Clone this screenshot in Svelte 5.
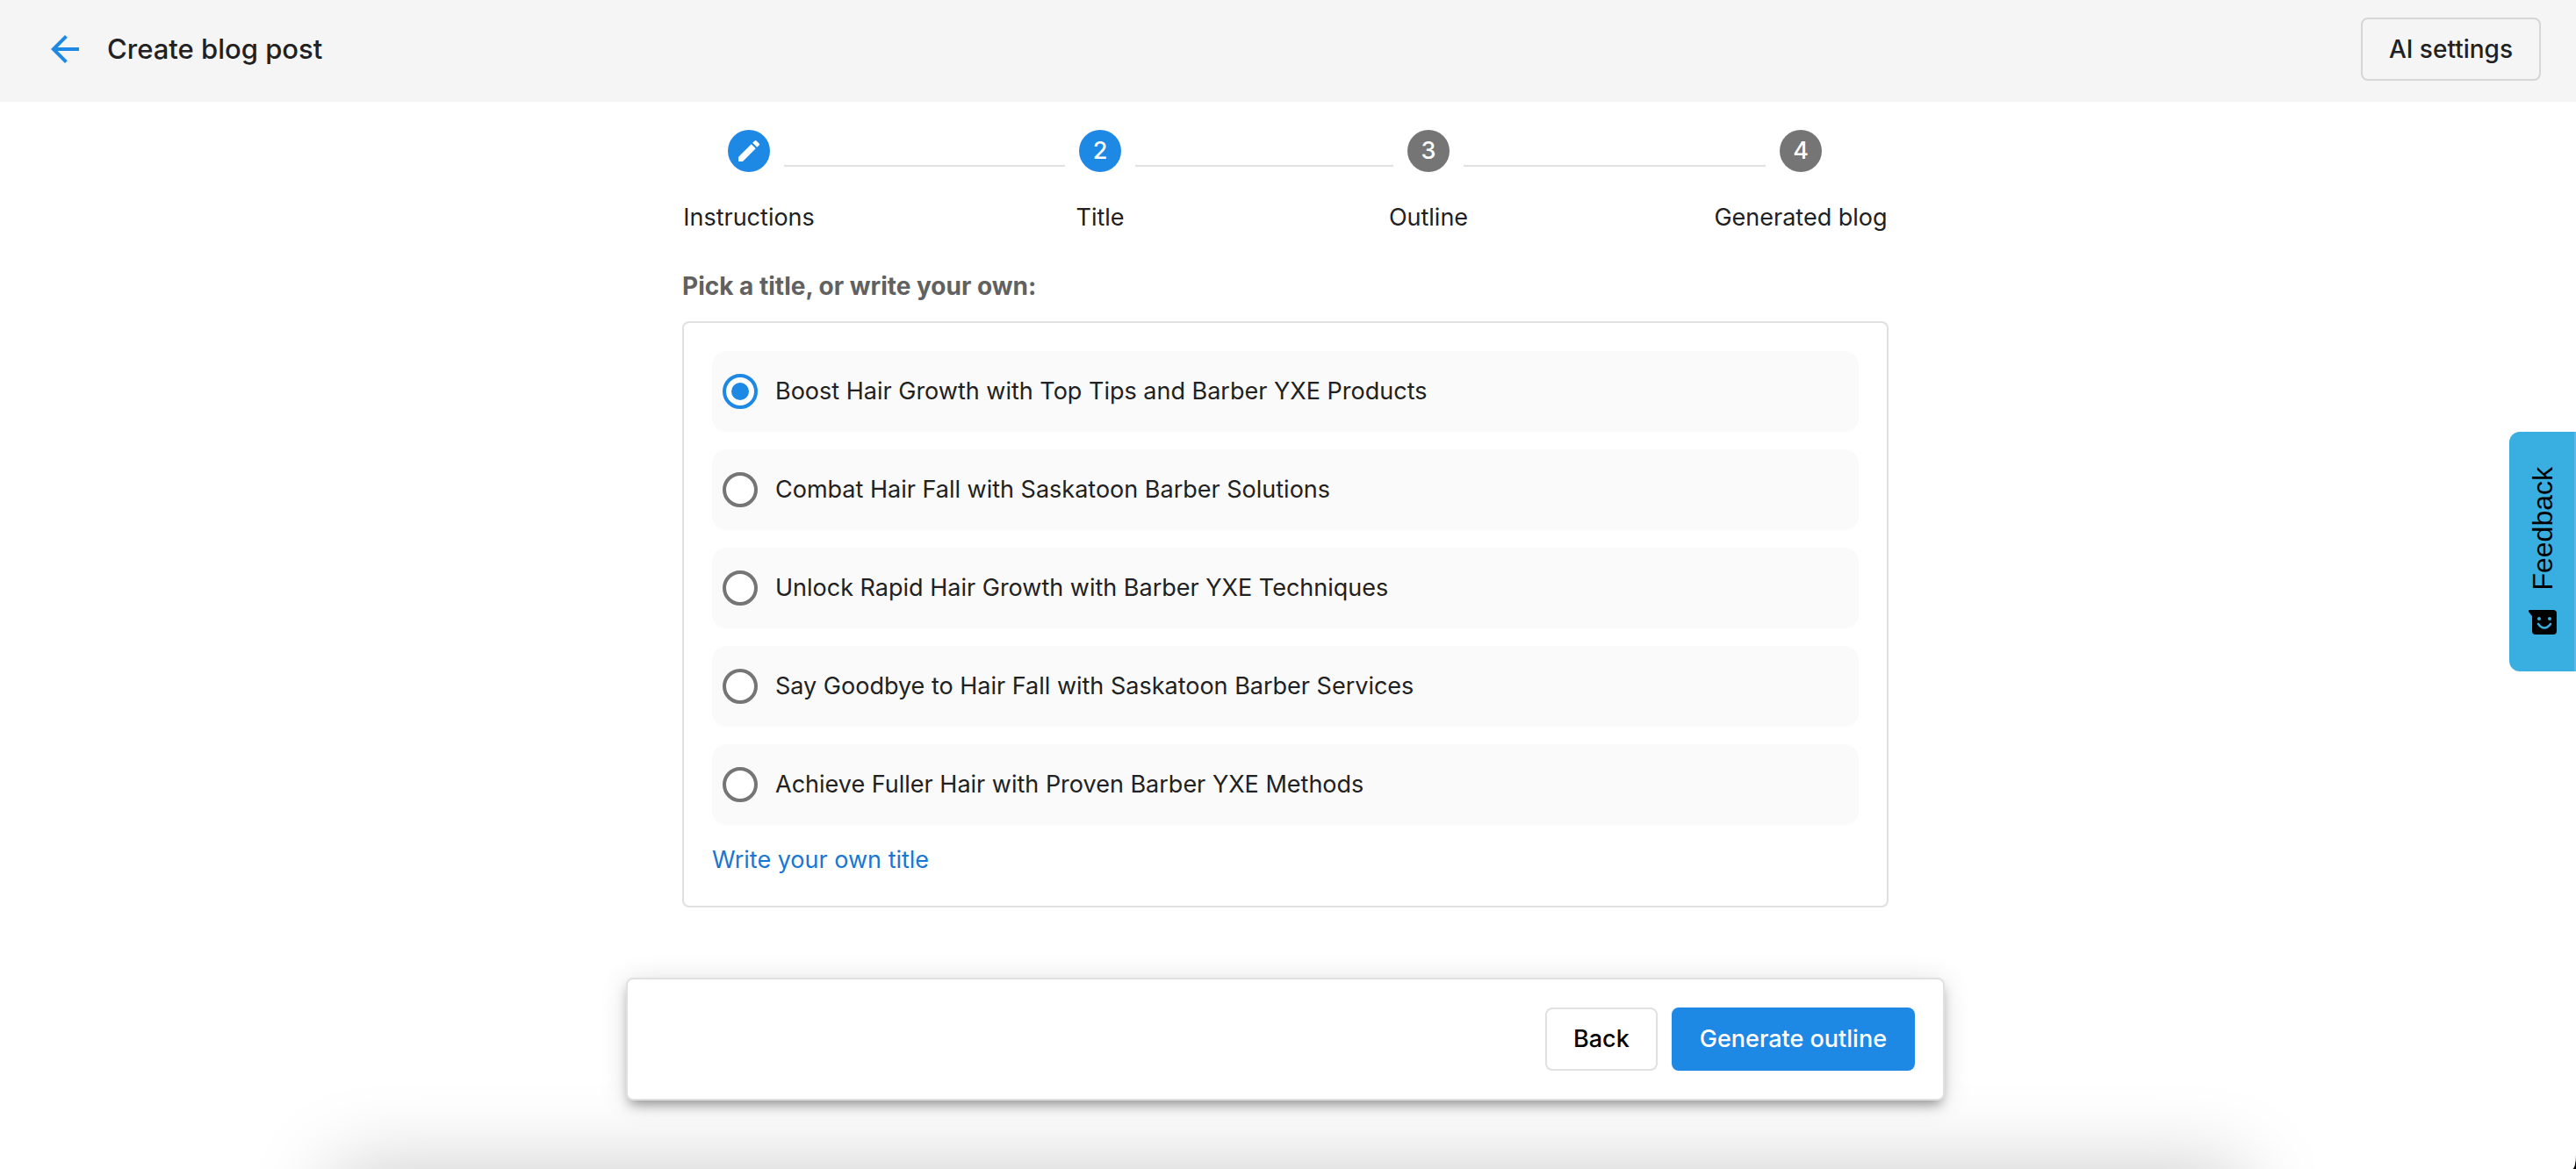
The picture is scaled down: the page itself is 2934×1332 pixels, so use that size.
<script>
  const titles = [
    'Boost Hair Growth with Top Tips and Barber YXE Products',
    'Combat Hair Fall with Saskatoon Barber Solutions',
    'Unlock Rapid Hair Growth with Barber YXE Techniques',
    'Say Goodbye to Hair Fall with Saskatoon Barber Services',
    'Achieve Fuller Hair with Proven Barber YXE Methods'
  ];
  let selected = $state(titles[0]);
</script>

<div class="page">
  <header class="topbar">
    <button class="icon-button" aria-label="Go back">
      <svg viewBox="0 0 24 24" width="48" height="48" aria-hidden="true">
        <path d="M20 11H7.83l5.59-5.59L12 4l-8 8 8 8 1.41-1.41L7.83 13H20v-2z" fill="#1e88e5" />
      </svg>
    </button>
    <h1>Create blog post</h1>
    <button class="btn settings">AI settings</button>
  </header>

  <main>
    <div class="content">
      <ol class="steps">
        <li class="step">
          <span class="dot active">
            <svg viewBox="0 0 24 24" width="32" height="32" aria-hidden="true">
              <path d="M3 17.25V21h3.75L17.81 9.94l-3.75-3.75L3 17.25zM20.71 7.04c.39-.39.39-1.02 0-1.41l-2.34-2.34a.996.996 0 0 0-1.41 0l-1.83 1.83 3.75 3.75 1.83-1.83z" fill="#fff" />
            </svg>
          </span>
          <span class="label">Instructions</span>
        </li>
        <li class="line" aria-hidden="true"></li>
        <li class="step" aria-current="step">
          <span class="dot active">2</span>
          <span class="label">Title</span>
        </li>
        <li class="line" aria-hidden="true"></li>
        <li class="step">
          <span class="dot">3</span>
          <span class="label">Outline</span>
        </li>
        <li class="line" aria-hidden="true"></li>
        <li class="step">
          <span class="dot">4</span>
          <span class="label">Generated blog</span>
        </li>
      </ol>

      <h2 id="pick">Pick a title, or write your own:</h2>
      <div class="panel" role="radiogroup" aria-labelledby="pick">
        {#each titles as title}
          <label class="option">
            <input type="radio" name="title" value={title} bind:group={selected} />
            <span>{title}</span>
          </label>
        {/each}
        <a class="own" href="#own">Write your own title</a>
      </div>
    </div>

    <footer class="actions">
      <button class="btn">Back</button>
      <button class="btn primary">Generate outline</button>
    </footer>
  </main>

  <div class="glow" aria-hidden="true"></div>

  <button class="feedback">
    <svg viewBox="0 0 32 28" width="32" height="28" aria-hidden="true">
      <path d="M1 0H28a4 4 0 0 1 4 4V24a4 4 0 0 1-4 4H8a4 4 0 0 1-4-4V7L0 2Q0 0 1 0Z" fill="#000" />
      <circle cx="12" cy="10" r="2" fill="#38aee1" />
      <circle cx="24" cy="10" r="2" fill="#38aee1" />
      <path d="M11 16q7 9 14 0" fill="none" stroke="#38aee1" stroke-width="2.6" stroke-linecap="round" />
    </svg>
    <span>Feedback</span>
  </button>
</div>

<style>
  :global(body) {
    background: #000;
  }
  .page {
    position: relative;
    min-height: 100vh;
    overflow: hidden;
    border-bottom-right-radius: 4px 16px;
    background: #fff;
    font-family: Inter, 'Liberation Sans', sans-serif;
    font-size: 27px;
    line-height: 40px;
    color: #212121;
    box-sizing: border-box;
  }
  .page *,
  .page *::before {
    box-sizing: border-box;
  }
  button {
    font: inherit;
    color: inherit;
    cursor: pointer;
  }
  .topbar {
    display: flex;
    align-items: center;
    padding: 20px 40px 24px 50px;
    background: #f5f5f5;
  }
  .icon-button {
    display: flex;
    padding: 0;
    border: 0;
    background: none;
  }
  h1 {
    flex: 1;
    margin: 0 0 0 24px;
    font-size: 31px;
    font-weight: 500;
  }
  .btn {
    height: 72px;
    padding: 0 30px;
    border: 2px solid #e0e0e0;
    border-radius: 8px;
    background: #fff;
    color: #000;
    font-weight: 500;
  }
  .settings {
    border-color: #d6d6d6;
    background: transparent;
    color: #212121;
    font-size: 28px;
  }
  .primary {
    border-color: #1e88e5;
    background: #1e88e5;
    color: #fff;
  }
  main {
    display: flex;
    flex-direction: column;
    align-items: center;
    padding: 32px 6px 78px 0;
  }
  .content {
    width: 100%;
    max-width: 1374px;
  }
  .steps {
    display: grid;
    grid-template-columns: 48px 352fr 48px 326fr 48px 376fr 48px;
    margin: 0 0 38px;
    padding: 0 76px 0 52px;
    list-style: none;
  }
  .step {
    display: flex;
    flex-direction: column;
    align-items: center;
    gap: 32px;
  }
  .dot {
    display: flex;
    align-items: center;
    justify-content: center;
    width: 48px;
    height: 48px;
    border-radius: 50%;
    background: #757575;
    color: #fff;
    font-weight: 500;
  }
  .dot.active {
    background: #1e88e5;
  }
  .label {
    white-space: nowrap;
  }
  .line {
    height: 2px;
    margin: 40px 16px 0;
    background: #e0e0e0;
  }
  h2 {
    margin: 0 0 20px;
    font-size: 28px;
    line-height: 40px;
    font-weight: 700;
    color: #616161;
  }
  .panel {
    display: flex;
    flex-direction: column;
    gap: 20px;
    padding: 32px;
    border: 2px solid #e0e0e0;
    border-radius: 8px;
  }
  .option {
    display: flex;
    align-items: center;
    gap: 20px;
    height: 92px;
    padding: 0 12px;
    border-radius: 16px;
    background: #fafafa;
  }
  input {
    appearance: none;
    display: grid;
    place-content: center;
    width: 40px;
    height: 40px;
    margin: 0;
    border: 4px solid #757575;
    border-radius: 50%;
    background: #fff;
  }
  input:checked {
    border-color: #1e88e5;
  }
  input:checked::before {
    content: '';
    width: 20px;
    height: 20px;
    border-radius: 50%;
    background: #1e88e5;
  }
  .own {
    align-self: flex-start;
    color: #1976d2;
    text-decoration: none;
  }
  .actions {
    display: flex;
    justify-content: flex-end;
    gap: 16px;
    width: 100%;
    max-width: 1502px;
    margin-top: 80px;
    padding: 32px;
    border: 2px solid #e0e0e0;
    border-radius: 8px;
    background: #fff;
    box-shadow:
      0 8px 14px -4px rgba(0, 0, 0, 0.4),
      0 2px 32px rgba(0, 0, 0, 0.12);
    z-index: 1;
  }
  .glow {
    position: absolute;
    top: 100%;
    left: 13%;
    right: 13%;
    height: 200px;
    box-shadow: 0 0 96px rgba(0, 0, 0, 0.21);
  }
  .feedback {
    position: fixed;
    top: 492px;
    right: 0;
    display: flex;
    flex-direction: column-reverse;
    align-items: center;
    gap: 22px;
    padding: 40px 18px 42px 20px;
    border: 0;
    border-right: 2px solid #5abbe6;
    border-radius: 12px 0 0 12px;
    background: #38aee1;
    color: #000;
    font-family: 'Liberation Sans', sans-serif;
    font-size: 32px;
    line-height: 36px;
    z-index: 2;
  }
  .feedback span {
    writing-mode: vertical-rl;
    transform: rotate(180deg);
  }
</style>
